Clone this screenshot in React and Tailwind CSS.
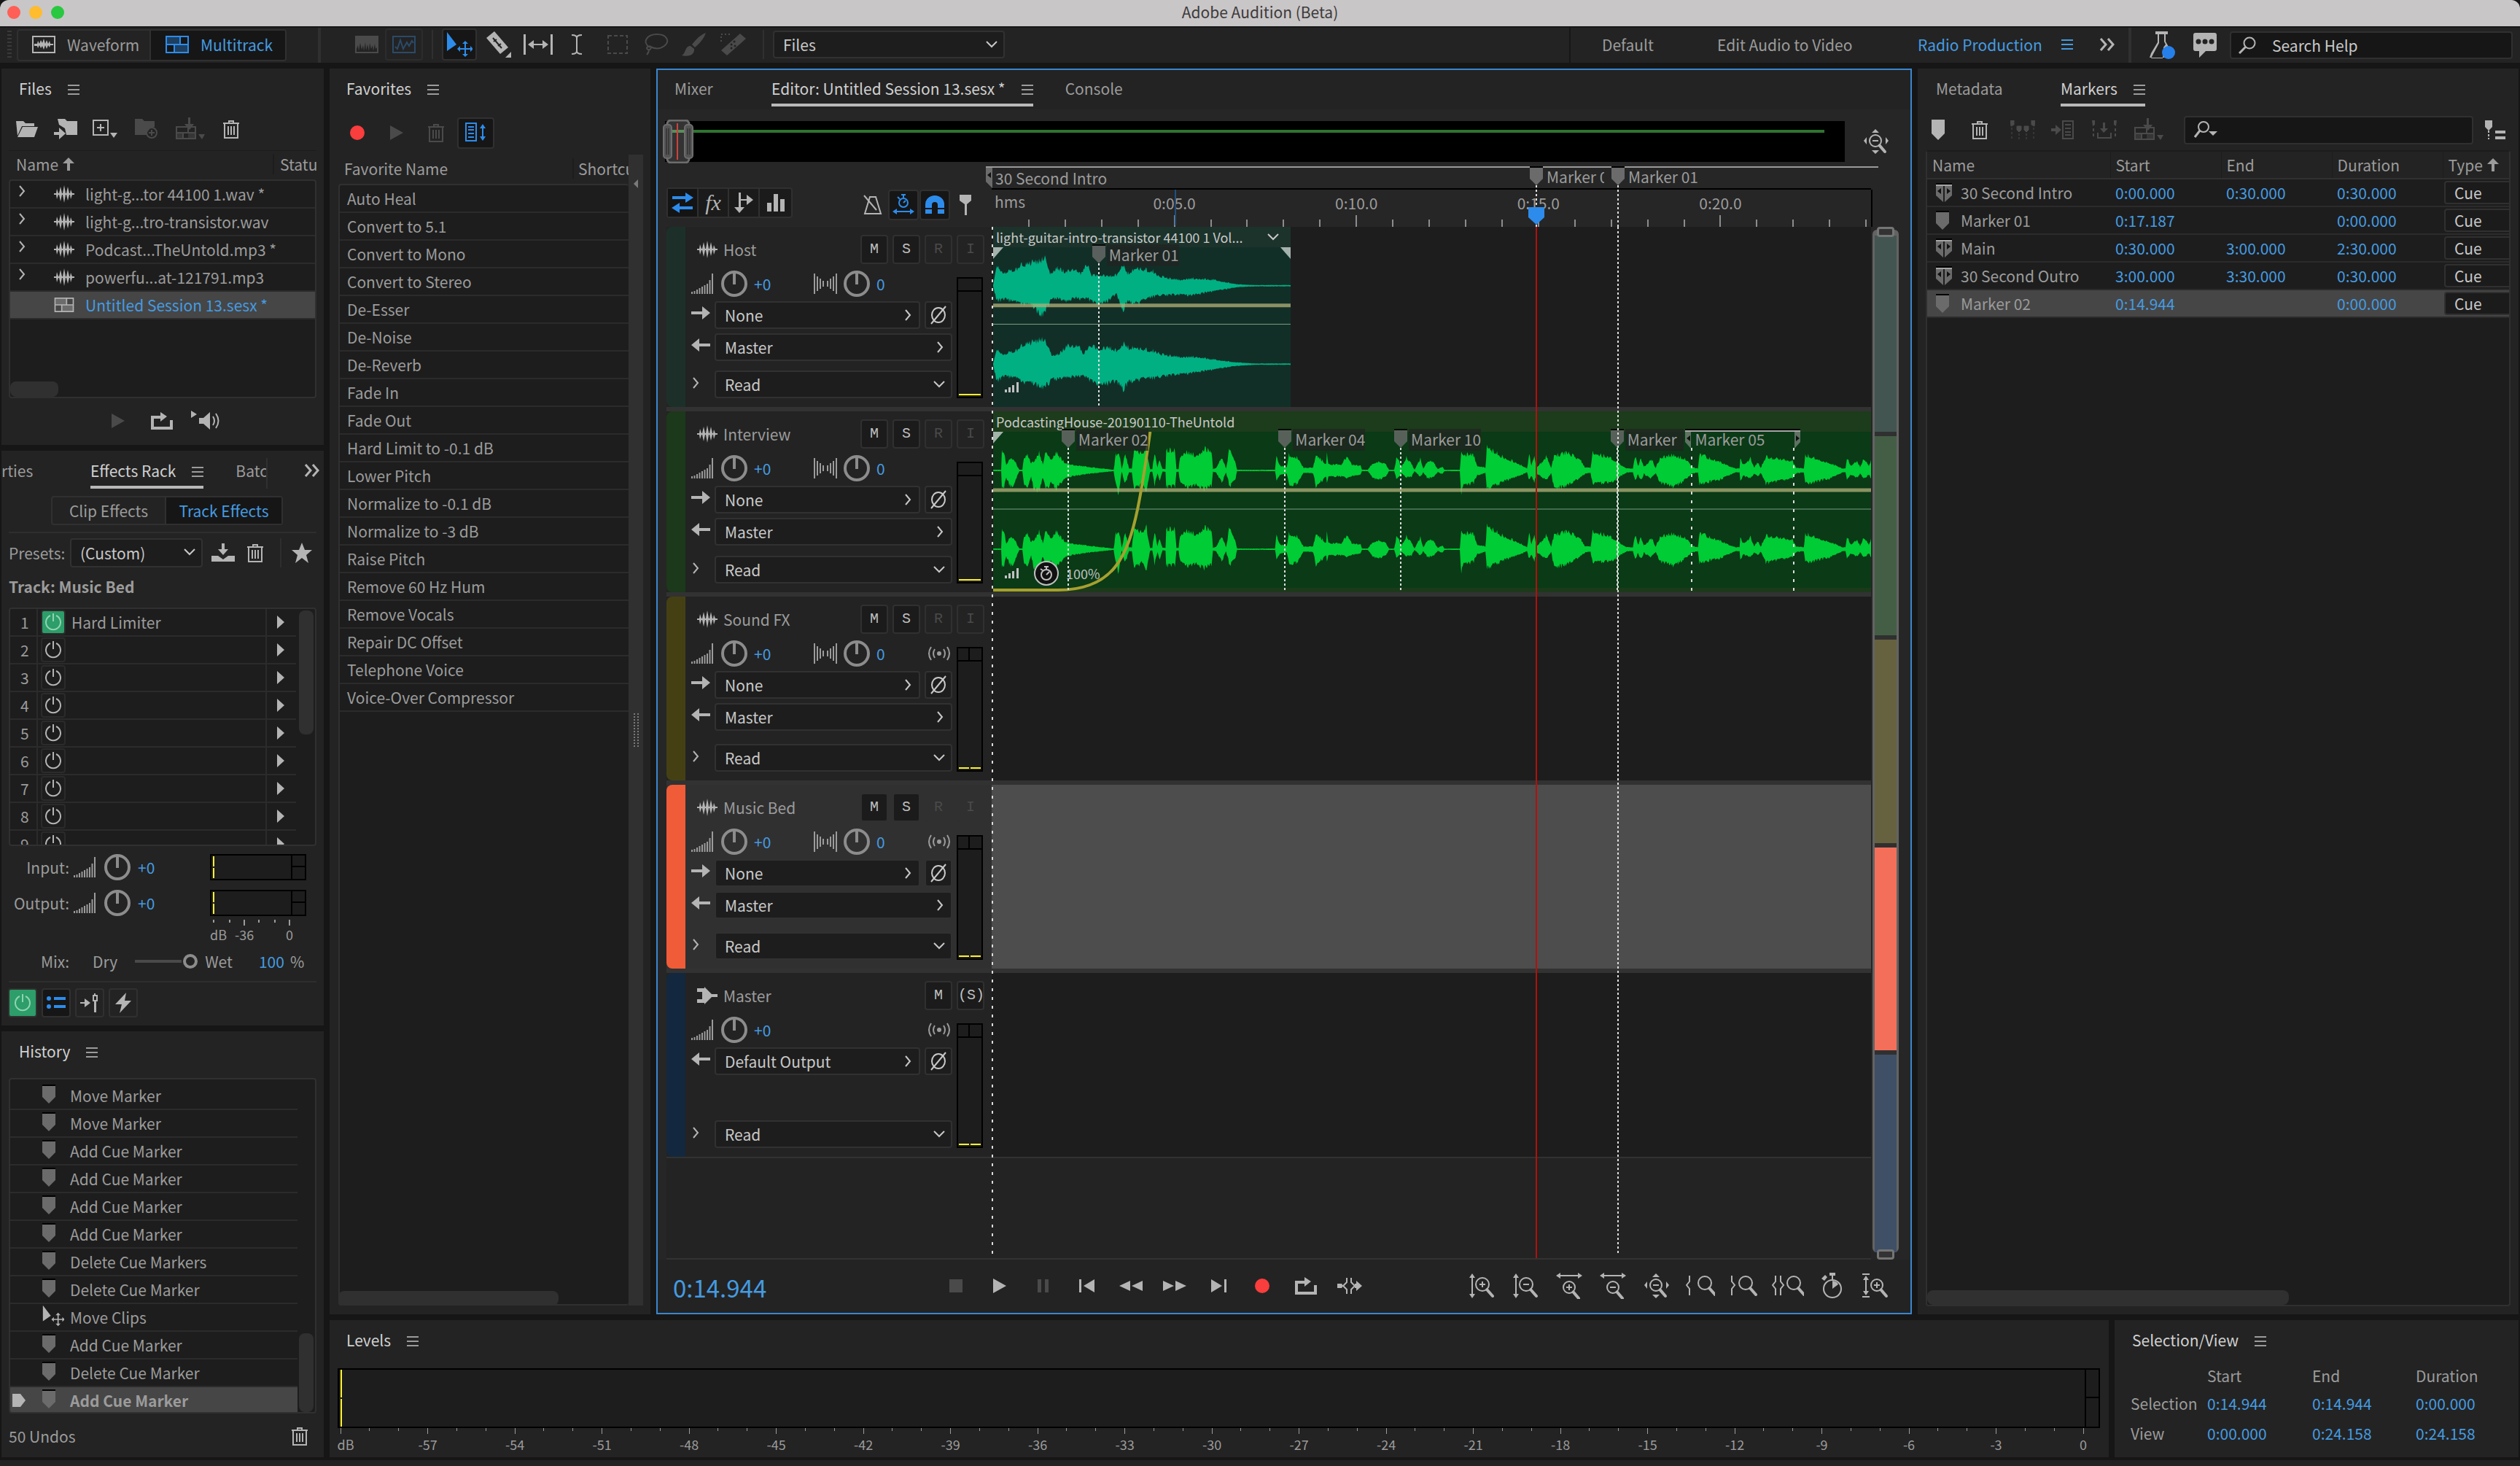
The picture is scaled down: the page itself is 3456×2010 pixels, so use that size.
import React from 'react'

const DURATION = 24.158
const pct = (seconds) => `${(seconds / DURATION) * 100}%`

const dash = "bg-[repeating-linear-gradient(to_bottom,#dcdcdc_0_3px,transparent_3px_6px)]"
const dashWide = "bg-[repeating-linear-gradient(to_bottom,#dcdcdc_0_4px,transparent_4px_12px)]"

/* ---------- icons ---------- */

const magnifier = (cx, cy, r) => (
    <>
        <circle cx={cx} cy={cy} r={r} fill="none" stroke="currentColor" strokeWidth="2" />
        <path d={`M${cx + r * 0.7} ${cy + r * 0.8}L${cx + r + 5} ${cy + r + 7}`} stroke="currentColor" strokeWidth="4" strokeLinecap="round" />
    </>
)

const trash = (
    <g fill="none" stroke="currentColor" strokeWidth="2">
        <path d="M1 5h22M9 5V2h6v3M3 5v20h18V5M8 9v12M12 9v12M16 9v12" />
    </g>
)

const multitrack = (
    <g>
        <path d="M1 1h30v22H1zM1 12h30M20 1v11M12 12v11" fill="none" stroke="currentColor" strokeWidth="2" />
        <path d="M2 2h18v10H2zM12 12h19v11H12z" fill="currentColor" opacity=".35" />
    </g>
)

const wave = (
    <path d="M0 11h3l1-6 2 6h1l2-9 2 9h1l2-11 2 11h1l2-9 2 9h1l1-5 2 5h3v2h-3l-2 6-1-6h-1l-2 8-2-8h-1l-2 11-2-11h-1l-2 9-2-9H6l-2 6-1-6H0z" fill="currentColor" />
)

const powerGlyph = (
    <g fill="none" stroke="currentColor" strokeWidth="2">
        <path d="M8 4a10 10 0 1 0 8 0M12 1v11" />
    </g>
)

const ICONS = {
    menu: [16, 16, <path d="M0 1h16v2H0zM0 7h16v2H0zM0 13h16v2H0z" fill="currentColor" />],
    waveBox: [32, 24, <g><path d="M1 1h30v22H1z" fill="none" stroke="currentColor" strokeWidth="2" /><path d="M3 11h4l1-4 2 4 2-5 2 4 2-6 2 7 2-5 2 5 2-4 1 4h4v2h-4l-1 3-2-3-2 5-2-5-2 6-2-5-2 3-2-4-2 4-1-3H3z" fill="currentColor" /></g>],
    multitrack: [32, 24, multitrack],
    wave: [28, 24, wave],
    spectral: [32, 24, <path d="M0 0h32v24H0zM2 22v-4l2-5 1 8 2-11 2 9 2-6 1 8 2-12 1 11 2-8 2 9 1-11 2 8 2-5 1 8 2-10 1 7 2-2v6z" fillRule="evenodd" fill="currentColor" />],
    pitch: [32, 24, <g fill="none" stroke="currentColor" strokeWidth="2"><path d="M1 1h30v22H1z" /><path d="M4 15l3 3 4-12 4 12 5-9 3 5 4-7 2 3" /></g>],
    move: [36, 34, <g fill="currentColor"><path d="M1 0v26l13-9z" /><path d="M26 12l-4 4h3v6h-6v-3l-4 4 4 4v-3h6v6h-3l4 4 4-4h-3v-6h6v3l4-4-4-4v3h-6v-6h3z" /></g>],
    razor: [36, 36, <g><path d="M1 9L12 0l19 22-11 9z" fill="currentColor" /><path d="M10 9l12 14M11 14l4-3M17 20l4-3" stroke="#232323" strokeWidth="2" fill="none" /><path d="M35 28v8h-8z" fill="currentColor" /></g>],
    slip: [40, 28, <g fill="currentColor"><path d="M0 0h3v28H0zM37 0h3v28h-3zM12 13h16v2H12z" /><path d="M6 14l8-6v12zM34 14l-8-6v12z" /></g>],
    ibeam: [16, 28, <path d="M1 1q7 0 7 4v18q0 4-7 4M15 1q-7 0-7 4v18q0 4 7 4" fill="none" stroke="currentColor" strokeWidth="2" />],
    marquee: [28, 26, <path d="M1 1h26v24H1z" fill="none" stroke="currentColor" strokeWidth="2" strokeDasharray="5 3" />],
    lasso: [34, 30, <path d="M8 19C-3 12 4 1 18 1s18 10 10 16-15 3-19 1-7 3-3 4 5-4 2-5M7 22q0 4-3 7" fill="none" stroke="currentColor" strokeWidth="2" />],
    brush: [34, 32, <path d="M33 0q-3 10-15 20l-4-4Q24 3 33 0zM12 18l5 4c1 9-9 11-17 9 6-3 4-13 12-13z" fill="currentColor" />],
    heal: [36, 32, <g><path d="M27 1l8 7L9 31l-8-7z" fill="currentColor" /><path d="M15 16h.1M19 12h.1M20 18h.1M15 21h.1" stroke="#232323" strokeWidth="3" strokeLinecap="round" /><path d="M1 12V2h14" fill="none" stroke="currentColor" strokeWidth="2" strokeDasharray="2 3" /></g>],
    chevDown: [16, 10, <path d="M1 1l7 7 7-7" fill="none" stroke="currentColor" strokeWidth="2" />],
    chevRight: [9, 16, <path d="M1 1l6 7-6 7" fill="none" stroke="currentColor" strokeWidth="2" />],
    double: [22, 18, <path d="M2 1l7 8-7 8M12 1l7 8-7 8" fill="none" stroke="currentColor" strokeWidth="3" />],
    flask: [36, 38, <g><path d="M8 0h17v4H8zM11 4h2v12L5 31l-3 6h16L19 22l3-4-2-4V4h2v10l8 14v8H0l2-6 9-15z" fill="currentColor" /><circle cx="26" cy="29" r="9" fill="#2680eb" /></g>],
    chat: [32, 34, <g><path d="M3 0h26q3 0 3 3v19q0 3-3 3H17l-9 9v-9H3q-3 0-3-3V3q0-3 3-3z" fill="currentColor" /><g fill="#232323"><circle cx="7" cy="12" r="3.5" /><circle cx="16" cy="12" r="3.5" /><circle cx="25" cy="12" r="3.5" /></g></g>],
    search: [24, 24, <g fill="none" stroke="currentColor"><circle cx="15" cy="9" r="7.5" strokeWidth="2" /><path d="M10 14l-9 9" strokeWidth="3" /></g>],
    searchDown: [34, 24, <g><g fill="none" stroke="currentColor"><circle cx="13" cy="8" r="7" strokeWidth="2" /><path d="M8 13l-7 9" strokeWidth="3" /></g><path d="M20 14h12l-6 6z" fill="currentColor" /></g>],
    open: [30, 22, <path d="M0 0h10l3 3h12v4H8L2 20zM9 8h21l-5 14H2z" fill="currentColor" />],
    importFile: [34, 28, <g fill="currentColor"><path d="M5 0h10l3 3h14v19H17l-2-9-8-5z" /><path d="M0 18h7v-6l9 8-9 8v-6H0z" /></g>],
    newFile: [34, 26, <g><path d="M1 1h20v20H1zM11 6v10M6 11h10" fill="none" stroke="currentColor" strokeWidth="2" /><path d="M24 18h10l-5 7z" fill="currentColor" /></g>],
    newFolder: [32, 28, <g><path d="M0 0h10l3 3h14v8l-6 2-4 5v4H0z" fill="currentColor" /><circle cx="23" cy="19" r="7" fill="none" stroke="currentColor" strokeWidth="2" /><path d="M23 15v8M19 19h8" stroke="currentColor" strokeWidth="2" /></g>],
    insert: [40, 32, <g><g fill="none" stroke="currentColor" strokeWidth="2"><path d="M1 13h26v16H1zM1 21h26M17 13v8M10 21v8" /></g><path d="M1 21h9v8H1zM17 21h10v8H17z" fill="currentColor" opacity=".5" /><path d="M17 0h3v9h5l-6 8-7-8h5zM31 23h9l-4 7z" fill="currentColor" /></g>],
    trash: [24, 26, trash],
    sortUp: [16, 18, <path d="M8 0l8 8h-6v10H6V8H0z" fill="currentColor" />],
    play: [20, 20, <path d="M1 0l18 10L1 20z" fill="currentColor" />],
    loop: [30, 24, <path d="M13 0l9 6-9 7V9H4v11h22v-9h4v13H0V5h13z" fill="currentColor" />],
    speaker: [42, 28, <g><path d="M0 0l8 5-8 5zM11 10h6l9-8v24l-9-8h-6z" fill="currentColor" /><path d="M30 8q4 6 0 12M34 4q7 10 0 20" fill="none" stroke="currentColor" strokeWidth="2" /></g>],
    record: [20, 20, <circle cx="10" cy="10" r="10" fill="#fa3d3d" />],
    listMode: [30, 28, <g fill="none" stroke="currentColor" strokeWidth="2"><path d="M1 1h14v24H1zM4 6h8M4 10h8M4 15h8M4 20h8M24 5v16" /><path d="M20 8l4-6 4 6zM20 19l4 6 4-6z" fill="currentColor" strokeWidth="0" /></g>],
    save: [32, 26, <path d="M14 0h4v8h5l-7 8-7-8h5zM0 17h9l7 5 7-5h9v8H0z" fill="currentColor" />],
    star: [28, 28, <path d="M14 0l4 10h10l-8 7 3 11-9-7-9 7 3-11-8-7h10z" fill="currentColor" />],
    power: [24, 26, powerGlyph],
    triangle: [10, 18, <path d="M0 0l10 9-10 9z" fill="currentColor" />],
    list: [26, 20, <g fill="currentColor"><circle cx="3" cy="4" r="3" /><circle cx="3" cy="15" r="3" /><path d="M10 2h16v4H10zM10 13h16v4H10z" /></g>],
    prefader: [26, 26, <g fill="currentColor"><path d="M0 12h6V7l8 6-8 6v-5H0zM19 9h3v17h-3z" /><path d="M18 3h5v7h-5zM20 0v3" fill="none" stroke="currentColor" strokeWidth="2" /></g>],
    bolt: [22, 28, <path d="M15 0L0 16h9L6 28l16-17h-9z" fill="currentColor" />],
    marker: [18, 28, <path d="M0 0h18v19l-9 9-9-9z" fill="currentColor" />],
    zoomOutFull: [34, 34, <g>{magnifier(16, 16, 8)}<path d="M12 16h8" stroke="currentColor" strokeWidth="2" /><path d="M16 0l5 5H11zM16 34l5-5H11zM0 16l4-5v10zM34 16l-4-5v10z" fill="currentColor" /></g>],
    zoomInV: [34, 34, <g>{magnifier(18, 15, 9)}<path d="M14 15h8M18 11v8M4 4v26" stroke="currentColor" strokeWidth="2" /><path d="M4 0l4 6H0zM4 34l4-6H0z" fill="currentColor" /></g>],
    zoomOutV: [34, 34, <g>{magnifier(18, 15, 9)}<path d="M14 15h8M4 4v26" stroke="currentColor" strokeWidth="2" /><path d="M4 0l4 6H0zM4 34l4-6H0z" fill="currentColor" /></g>],
    zoomInH: [36, 36, <g>{magnifier(18, 20, 8)}<path d="M14 20h8M18 16v8M5 4h26" stroke="currentColor" strokeWidth="2" /><path d="M0 4l6-4v8zM36 4l-6-4v8z" fill="currentColor" /></g>],
    zoomOutH: [36, 36, <g>{magnifier(18, 20, 8)}<path d="M14 20h8M5 4h26" stroke="currentColor" strokeWidth="2" /><path d="M0 4l6-4v8zM36 4l-6-4v8z" fill="currentColor" /></g>],
    zoomInPoint: [40, 28, <g>{magnifier(26, 10, 9)}<path d="M5 0v8l-4 5 4 5v9" fill="none" stroke="currentColor" strokeWidth="2" /></g>],
    zoomOutPoint: [36, 28, <g>{magnifier(20, 10, 9)}<path d="M1 0v8l4 5-4 5v9" fill="none" stroke="currentColor" strokeWidth="2" /></g>],
    zoomSelection: [44, 28, <g>{magnifier(30, 10, 9)}<path d="M5 0v8l-4 5 4 5v9M12 0v8l4 5-4 5v9" fill="none" stroke="currentColor" strokeWidth="2" /></g>],
    stopwatch: [28, 36, <g><circle cx="15" cy="22" r="12" fill="none" stroke="currentColor" strokeWidth="2" /><path d="M15 22V11q7 1 8 5zM11 0h8v4h-3v5h-2V4h-3zM0 8l5-5 3 3-4 5z" fill="currentColor" /></g>],
    zoomTrack: [36, 34, <g>{magnifier(20, 16, 8)}<path d="M16 16h8M20 12v8M5 6v20M0 1h10M0 32h10" stroke="currentColor" strokeWidth="2" /><path d="M5 3l4 6H1zM5 30l4-6H1z" fill="currentColor" /></g>],
    stop: [18, 18, <path d="M0 0h18v18H0z" fill="currentColor" />],
    pause: [16, 18, <path d="M0 0h5v18H0zM10 0h5v18h-5z" fill="currentColor" />],
    prev: [22, 18, <path d="M0 0h3v18H0zM21 0v18L6 9z" fill="currentColor" />],
    next: [22, 18, <path d="M19 0h3v18h-3zM1 0v18l15-9z" fill="currentColor" />],
    rewind: [32, 14, <path d="M15 0v14L0 7zM32 0v14L17 7z" fill="currentColor" />],
    forward: [32, 14, <path d="M0 0v14l15-7zM17 0v14l15-7z" fill="currentColor" />],
    skip: [34, 22, <g><path d="M0 8h6l2 3-2 3H0zM24 8h2V4l8 7-8 7v-4h-2z" fill="currentColor" /><path d="M13 0v6l-5 5 5 5v6M19 0v6l5 5-5 5v6" fill="none" stroke="currentColor" strokeWidth="2" /></g>],
    swap: [30, 30, <path d="M1 6h18V1l11 7-11 7v-5H1zM29 20H11v-5L0 22l11 7v-5h18z" fill="currentColor" />],
    sends: [26, 28, <g fill="currentColor"><path d="M6 0h3v20h5l-7 8-7-8h6z" /><path d="M9 9h8V3l9 7-9 7v-6H9z" /></g>],
    bars: [24, 24, <path d="M0 12h6v12H0zM9 0h6v24H9zM18 7h6v17h-6z" fill="currentColor" />],
    metronome: [26, 28, <g fill="none" stroke="currentColor" strokeWidth="2"><path d="M9 3h8l7 23H2z" /><path d="M1 1l17 20" /></g>],
    snapTime: [30, 30, <g fill="none" stroke="currentColor" strokeWidth="2"><circle cx="15" cy="12" r="6" /><path d="M15 12l3-3M12 1h6M15 1v4M7 4l3 3M4 24h22" /><path d="M0 24l6-4v8zM30 24l-6-4v8z" fill="currentColor" strokeWidth="0" /></g>],
    magnet: [26, 26, <g><path d="M0 25V12a13 12 0 0 1 26 0v13h-9V13a4 4 0 0 0-8 0v12z" fill="currentColor" /><path d="M0 18h9M17 18h9" stroke="#161616" strokeWidth="2" /></g>],
    pin: [16, 28, <path d="M0 0h16v8l-6 5v15H7V13L0 8z" fill="currentColor" />],
    volume: [32, 28, <path d="M1 28v-3M4.500 28v-4M8 28v-6M11.500 28v-8M15 28v-10M18.500 28v-12M22 28v-14M25.500 28v-19M29 28V0" stroke="currentColor" strokeWidth="2" />],
    pan: [32, 28, <path d="M1 0v28M5 4v20M9 7v14M13 10v8M19 10v8M23 7v14M27 4v20M31 0v28" stroke="currentColor" strokeWidth="2" />],
    knob: [36, 36, <g fill="none" stroke="#8c8c8c"><circle cx="18" cy="18" r="16" strokeWidth="4" /><path d="M18 3v16" strokeWidth="4" /></g>],
    arrowIn: [26, 18, <path d="M0 7h15V0l11 9-11 9v-7H0z" fill="currentColor" />],
    arrowOut: [26, 18, <path d="M26 7H11V0L0 9l11 9v-7h15z" fill="currentColor" />],
    phase: [24, 26, <g fill="none" stroke="currentColor" strokeWidth="2"><ellipse cx="12" cy="13" rx="9" ry="10" /><path d="M2 25L22 1" /></g>],
    mono: [32, 20, <g fill="none" stroke="currentColor" strokeWidth="2"><circle cx="16" cy="10" r="3" fill="currentColor" strokeWidth="0" /><path d="M10 4q-4 6 0 12M22 4q4 6 0 12M5 1q-6 9 0 18M27 1q6 9 0 18" /></g>],
    master: [28, 24, <path d="M0 2h10V0l10 10h8v4h-8L10 24v-2H0v-5h7V7H0z" fill="currentColor" />],
    clipBars: [20, 14, <path d="M0 10h3v4H0zM5 7h3v7H5zM10 4h3v10h-3zM16 0h3v14h-3z" fill="currentColor" />],
    mergeMarkers: [34, 26, <path d="M0 0h5v6l-4 2zM34 0h-5v6l4 2zM9 8h6v5l-3 3-3-3zM19 8h6v5l-3 3-3-3zM2 10v3M2 16v3M2 22v3M12 18v3M12 23v3M22 18v3M22 23v3M32 10v3M32 16v3M32 22v3" fill="currentColor" stroke="currentColor" />],
    toPlaylist: [32, 26, <g><path d="M0 11h6V6l8 7-8 7v-5H0z" fill="currentColor" /><path d="M16 1h14v24H16zM19 6h8M19 11h8M19 16h8M19 20h8" fill="none" stroke="currentColor" strokeWidth="2" /></g>],
    exportMarkers: [34, 26, <g><path d="M0 0h4v6l-3 2zM34 0h-4v6l3 2zM15 3h3v8h4l-6 6-5-6h4z" fill="currentColor" /><path d="M2 11v14M32 11v14" stroke="currentColor" strokeWidth="2" strokeDasharray="4 3" /><path d="M8 17v7h18v-7" fill="none" stroke="currentColor" strokeWidth="2" /></g>],
    markerList: [28, 26, <g><path d="M0 0h10v9l-5 5-5-5zM14 14h14v4H14zM14 22h14v4H14z" fill="currentColor" /><path d="M5 14v12" stroke="currentColor" strokeWidth="2" strokeDasharray="3 2" /></g>],
    cue: [18, 26, <g><path d="M0 0h18v2H0z" fill="#000" /><path d="M0 2h18v15l-9 9-9-9z" fill="#6b6b6b" /></g>],
    range: [22, 26, <g><path d="M0 0h22v2H0z" fill="#000" /><path d="M0 2h10v24L0 17zM12 2h10v15l-10 9z" fill="#6b6b6b" /><path d="M0 2h22v2H0z" fill="#a5a5a5" /><path d="M7 7v8l-5-4zM15 7v8l5-4z" fill="#111" /></g>],
}

function Icon({ name, className = "" }) {
    const [w, h, body] = ICONS[name]
    return (
        <svg width={w} height={h} viewBox={`0 0 ${w} ${h}`} className={`shrink-0 ${className}`} aria-hidden="true">
            {body}
        </svg>
    )
}

function IconButton({ name, label, className = "" }) {
    return (
        <button type="button" aria-label={label || name} className={`flex shrink-0 items-center justify-center ${className}`}>
            <Icon name={name} />
        </button>
    )
}

/* ---------- shared pieces ---------- */

function Panel({ className = "", children }) {
    return <section className={`flex min-w-0 flex-col overflow-hidden bg-[#232323] ${className}`}>{children}</section>
}

function Tab({ children, active, menu, className = "" }) {
    return (
        <div className={`flex h-[52px] shrink-0 items-center gap-[22px] whitespace-nowrap border-b-4 pt-[6px] ${active ? "border-[#b9b9b9]" : "border-transparent"} ${className}`}>
            <button type="button" className={menu ? "text-[#d0d0d0]" : "text-[#9b9b9b]"}>{children}</button>
            {menu && <IconButton name="menu" label="Panel menu" className="pt-[3px]" />}
        </div>
    )
}

function Select({ label, value, className = "" }) {
    return (
        <div className={`relative rounded border-2 border-[#313131] bg-[#1d1d1d] text-[#c8c8c8] ${className}`}>
            <select aria-label={label} className="block h-full w-full appearance-none pl-3 outline-none">
                <option>{value}</option>
            </select>
            <Icon name="chevDown" className="pointer-events-none absolute right-2 top-3" />
        </div>
    )
}

const ScrollThumb = ({ className }) => <div className={`absolute rounded-lg bg-[#303030] ${className}`} />

/* ---------- top bar ---------- */

function TitleBar() {
    return (
        <header className="relative flex h-[36px] shrink-0 items-center justify-center rounded-t-xl bg-[#c9c6c7] pb-1 text-[#3d3b3c]">
            <div className="absolute left-[10px] top-2 flex gap-3">
                <span className="size-[18px] rounded-full bg-[#ff5f57]" />
                <span className="size-[18px] rounded-full bg-[#febc2e]" />
                <span className="size-[18px] rounded-full bg-[#28c840]" />
            </div>
            <h1>Adobe Audition (Beta)</h1>
        </header>
    )
}

function Toolbar() {
    return (
        <nav className="mt-[2px] flex h-[48px] shrink-0 items-center bg-[#232323] text-[#b4b4b4]">
            <div className="ml-[10px] mr-[7px] h-[40px] w-[6px] bg-[repeating-linear-gradient(to_bottom,#3a3a3a_0_2px,transparent_2px_5px)]" />
            <div className="flex h-[44px] overflow-hidden rounded border-2 border-[#303030]">
                <button type="button" className="flex w-[182px] items-center gap-4 border-r-2 border-[#303030] pb-[2px] pl-[19px] text-[#9b9b9b]">
                    <Icon name="waveBox" className="text-[#b4b4b4]" />Waveform
                </button>
                <button type="button" className="flex w-[184px] items-center gap-4 bg-[#161616] pb-[2px] pl-5 text-[#459be0]">
                    <Icon name="multitrack" className="text-[#2d8ceb]" />Multitrack
                </button>
            </div>
            <div className="ml-[43px] h-full w-1 bg-[#303030]" />
            <div className="flex flex-1 items-center pb-[2px]">
                <IconButton name="spectral" className="ml-[38px] w-[50px] text-[#4a4a4a]" />
                <IconButton name="pitch" className="h-[44px] w-[52px] rounded border-2 border-[#2c2c2c] text-[#2b4a68]" />
                <div className="mx-[12px] h-[40px] w-[2px] bg-[#303030]" />
                <IconButton name="move" className="h-[44px] w-[48px] rounded border-2 border-[#303030] bg-[#161616] text-[#2d8ceb]" />
                <IconButton name="razor" className="w-[60px]" />
                <IconButton name="slip" className="w-[48px]" />
                <IconButton name="ibeam" className="w-[58px]" />
                <IconButton name="marquee" className="w-[54px] text-[#4a4a4a]" />
                <IconButton name="lasso" className="w-[52px] text-[#4a4a4a]" />
                <IconButton name="brush" className="w-[52px] text-[#4a4a4a]" />
                <IconButton name="heal" className="w-[56px] text-[#4a4a4a]" />
                <div className="mx-[12px] h-[40px] w-[2px] bg-[#303030]" />
                <Select label="Snap target" value="Files" className="h-[38px] w-[318px]" />
            </div>
            <div className="flex h-full items-center border-l-2 border-[#161616] pb-[2px] pl-[43px] text-[#9b9b9b]">
                <a href="#default" className="w-[158px]">Default</a>
                <a href="#edit" className="w-[275px]">Edit Audio to Video</a>
                <a href="#radio" className="w-[197px] text-[#459be0]">Radio Production</a>
                <IconButton name="menu" label="Workspace menu" className="text-[#459be0]" />
                <IconButton name="double" label="More workspaces" className="ml-[36px] text-[#b4b4b4]" />
            </div>
            <div className="ml-[18px] h-full w-1 bg-[#303030]" />
            <IconButton name="flask" className="ml-[25px]" />
            <IconButton name="chat" className="ml-[24px]" />
            <label className="ml-[18px] mr-[10px] flex h-[38px] w-[388px] items-center gap-[22px] rounded border-2 border-[#303030] bg-[#161616] pl-[10px]">
                <Icon name="search" />
                <input aria-label="Search Help" placeholder="Search Help" className="w-full bg-transparent outline-none placeholder:text-[#c8c8c8]" />
            </label>
        </nav>
    )
}

/* ---------- left column ---------- */

const FILES = ["light-g...tor 44100 1.wav *", "light-g...tro-transistor.wav", "Podcast...TheUntold.mp3 *", "powerfu...at-121791.mp3"]

function FilesPanel() {
    return (
        <Panel className="h-[516px] shrink-0">
            <Tab menu className="ml-6">Files</Tab>
            <div className="flex h-[60px] items-center pl-5 pt-[2px] text-[#b4b4b4]">
                <IconButton name="open" />
                <IconButton name="importFile" className="ml-[22px]" />
                <IconButton name="newFile" className="ml-[19px]" />
                <IconButton name="newFolder" className="ml-[24px] text-[#4a4a4a]" />
                <IconButton name="insert" className="ml-[24px] text-[#4a4a4a]" />
                <IconButton name="trash" className="ml-[24px]" />
            </div>
            <div className="mx-[10px] flex h-[40px] items-center border-t border-[#1c1c1c] pb-[3px] pl-[10px]">
                <span>Name</span>
                <Icon name="sortUp" className="ml-[6px]" />
                <span className="ml-auto flex h-[28px] w-[60px] items-center overflow-hidden border-l-2 border-[#1c1c1c] pl-2">Statu</span>
            </div>
            <ul className="relative mx-[10px] h-[300px] rounded border-2 border-[#303030] bg-[#1d1d1d]">
                {FILES.map((name) => (
                    <li key={name} className="flex h-[38px] items-center border-b-2 border-[#2b2b2b] pl-3">
                        <Icon name="chevRight" className="mb-2 text-[#b4b4b4]" />
                        <Icon name="wave" className="ml-[39px] mr-[15px] text-[#b4b4b4]" />
                        {name}
                    </li>
                ))}
                <li className="flex h-[38px] items-center border-b-2 border-[#2b2b2b] bg-[#464646] pl-[60px] text-[#459be0]">
                    <svg width="28" height="20" viewBox="0 0 32 24" className="mr-[15px] text-[#b4b4b4]">{multitrack}</svg>
                    Untitled Session 13.sesx *
                </li>
                <ScrollThumb className="bottom-0 left-0 h-[21px] w-[66px]" />
            </ul>
            <div className="flex flex-1 items-center pb-[2px] pl-[150px] text-[#b4b4b4]">
                <IconButton name="play" label="Play" className="text-[#4a4a4a]" />
                <IconButton name="loop" label="Loop" className="ml-[35px]" />
                <IconButton name="speaker" label="Auto-play" className="ml-[25px]" />
            </div>
        </Panel>
    )
}

const Knob = ({ label }) => <IconButton name="knob" label={label} />

function RackMeter() {
    return (
        <div className="flex h-[36px] w-[132px] border-2 border-black bg-[#1d1d1d]">
            <div className="flex flex-1 flex-col gap-[2px] px-[2px] py-px">
                <span className="w-[2px] flex-1 bg-[#fff22d]" />
                <span className="w-[2px] flex-1 bg-[#fff22d]" />
            </div>
            <div className="flex w-[19px] flex-col border-l-2 border-black">
                <div className="h-1/2 border-b-2 border-black" />
            </div>
        </div>
    )
}

function EffectsPanel() {
    return (
        <Panel className="h-[788px] shrink-0">
            <div className="flex items-start">
                <Tab className="w-[122px]">rties</Tab>
                <Tab active menu>Effects Rack</Tab>
                <Tab className="ml-[44px] w-[42px] overflow-hidden">Batc</Tab>
                <div className="mt-[10px] h-[42px] w-[2px] bg-[#303030]" />
                <IconButton name="double" label="More tabs" className="ml-[50px] mt-[18px] text-[#b4b4b4]" />
            </div>
            <div className="ml-[68px] mt-[10px] flex h-[40px] w-[318px] shrink-0 rounded border-2 border-[#303030]">
                <button type="button" className="w-[156px] border-r-2 border-[#303030]">Clip Effects</button>
                <button type="button" className="flex-1 bg-[#161616] text-[#459be0]">Track Effects</button>
            </div>
            <div className="mx-[10px] mt-[9px] h-[2px] shrink-0 bg-[#2e2e2e]" />
            <div className="mt-[7px] flex h-[40px] shrink-0 items-center pl-[10px] text-[#b4b4b4]">
                <span className="w-[84px] text-[#9b9b9b]">Presets:</span>
                <Select label="Presets" value="(Custom)" className="h-[40px] w-[182px]" />
                <IconButton name="save" className="ml-3" />
                <IconButton name="trash" className="ml-4" />
                <div className="ml-[22px] h-full w-[2px] bg-[#2e2e2e]" />
                <IconButton name="star" label="Favorite" className="ml-[14px]" />
            </div>
            <h2 className="ml-[10px] flex h-[55px] shrink-0 items-center pb-[3px] font-bold">Track: Music Bed</h2>
            <div className="relative mx-[10px] h-[327px] shrink-0 overflow-hidden rounded border-2 border-[#303030] bg-[#1d1d1d]">
                <ol className="mr-[26px]">
                    {["Hard Limiter", "", "", "", "", "", "", "", ""].map((fx, i) => (
                        <li key={i} className="flex h-[38px] items-center border-b-2 border-[#2b2b2b]">
                            <span className="w-[38px] border-r-2 border-[#2b2b2b] pl-[14px] leading-[36px]">{i + 1}</span>
                            <button type="button" aria-label={`Power ${i + 1}`} className={`ml-1 flex h-[34px] w-[34px] items-center justify-center rounded border-2 border-[#2b2b2b] ${i ? "text-[#b4b4b4]" : "bg-[#2d9d69] text-[#8fd4b2]"}`}>
                                <Icon name="power" />
                            </button>
                            <span className="ml-2">{fx}</span>
                            <span className="ml-auto flex h-full w-[42px] items-center border-l-2 border-[#2b2b2b] pl-[14px] text-[#b4b4b4]">
                                <Icon name="triangle" />
                            </span>
                        </li>
                    ))}
                </ol>
                <ScrollThumb className="right-[2px] top-[2px] h-[170px] w-5" />
            </div>
            <div className="mt-[4px] flex flex-col pr-[24px]">
                {["Input:", "Output:"].map((label) => (
                    <div key={label} className="flex h-[49px] items-center">
                        <span className="w-[93px] text-right">{label}</span>
                        <Icon name="volume" className="ml-[6px] mr-[10px] text-[#9b9b9b]" />
                        <Knob label={label} />
                        <span className="ml-[10px] text-[#459be0]">+0</span>
                        <div className="ml-auto"><RackMeter /></div>
                    </div>
                ))}
            </div>
            <div className="-mt-px ml-[286px] flex h-[34px] w-[132px] shrink-0 flex-col text-[18px] leading-[24px]">
                <svg height="8" width="132"><path d="M5 0v4M27 0v4M47 0v8M67 0v4M89 0v4M109 0v8" stroke="#9b9b9b" strokeWidth="2" /></svg>
                <div className="flex"><span className="w-[34px]">dB</span><span className="w-[70px]">-36</span><span>0</span></div>
            </div>
            <div className="mb-[2px] mt-[6px] flex h-[34px] shrink-0 items-center">
                <label htmlFor="mix" className="w-[93px] text-right">Mix:</label>
                <span className="ml-[32px]">Dry</span>
                <input id="mix" type="range" defaultValue="100" className="ml-[24px] h-[22px] w-[86px] appearance-none bg-[linear-gradient(#4a4a4a,#4a4a4a)] bg-[length:64px_4px] bg-left bg-no-repeat [&::-webkit-slider-thumb]:size-5 [&::-webkit-slider-thumb]:appearance-none [&::-webkit-slider-thumb]:rounded-full [&::-webkit-slider-thumb]:border-4 [&::-webkit-slider-thumb]:border-[#8c8c8c] [&::-webkit-slider-thumb]:bg-[#232323]" />
                <span className="ml-[10px]">Wet</span>
                <span className="ml-[36px] text-[#459be0]">100</span>
                <span className="ml-2">%</span>
            </div>
            <div className="mx-[10px] mt-[8px] h-[2px] shrink-0 bg-[#2e2e2e]" />
            <div className="mt-[8px] flex gap-[6px] pl-[9px] text-[#b4b4b4]">
                <IconButton name="power" className="size-10 rounded border-2 border-[#303030] bg-[#2d9d69] text-[#8fd4b2]" />
                <IconButton name="list" className="size-10 rounded border-2 border-[#303030] bg-[#161616] text-[#2d8ceb]" />
                <IconButton name="prefader" className="size-10 rounded border-2 border-[#303030]" />
                <IconButton name="bolt" className="size-10 rounded border-2 border-[#303030]" />
            </div>
        </Panel>
    )
}

const HISTORY = ["Move Marker", "Move Marker", "Add Cue Marker", "Add Cue Marker", "Add Cue Marker", "Add Cue Marker", "Delete Cue Markers", "Delete Cue Marker", "Move Clips", "Add Cue Marker", "Delete Cue Marker", "Add Cue Marker"]

function HistoryPanel() {
    return (
        <Panel className="flex-1">
            <Tab menu className="ml-6">History</Tab>
            <ul className="relative mx-[10px] mt-[12px] flex-1 overflow-hidden rounded border-2 border-[#303030] bg-[#1d1d1d] pr-[24px] pt-1">
                {HISTORY.map((step, i) => {
                    const last = i === HISTORY.length - 1
                    return (
                        <li key={i} className={`flex h-[38px] items-center border-b-2 border-[#2b2b2b] ${last ? "bg-[#464646] font-bold" : ""}`}>
                            <span className="w-[40px] pl-[3px] text-[#b4b4b4]">
                                {last && <svg width="18" height="18"><path d="M0 0h11l7 9-7 9H0z" fill="currentColor" /></svg>}
                            </span>
                            <span className="flex w-[42px] pb-1 pl-1 text-[#b4b4b4]">
                                {step === "Move Clips" ? <svg width="30" height="30" viewBox="0 0 36 34">{ICONS.move[2]}</svg> : <Icon name="cue" />}
                            </span>
                            {step}
                        </li>
                    )
                })}
                <ScrollThumb className="bottom-0 right-[2px] h-[108px] w-5" />
            </ul>
            <div className="flex h-[60px] items-center justify-between pl-[10px] pr-[21px] pt-[2px]">
                50 Undos
                <IconButton name="trash" label="Delete history" className="text-[#b4b4b4]" />
            </div>
        </Panel>
    )
}

/* ---------- favorites ---------- */

const FAVORITES = ["Auto Heal", "Convert to 5.1", "Convert to Mono", "Convert to Stereo", "De-Esser", "De-Noise", "De-Reverb", "Fade In", "Fade Out", "Hard Limit to -0.1 dB", "Lower Pitch", "Normalize to -0.1 dB", "Normalize to -3 dB", "Raise Pitch", "Remove 60 Hz Hum", "Remove Vocals", "Repair DC Offset", "Telephone Voice", "Voice-Over Compressor"]

function FavoritesPanel() {
    return (
        <Panel className="w-[440px] shrink-0">
            <Tab menu className="ml-[23px]">Favorites</Tab>
            <div className="flex h-[66px] shrink-0 items-center pl-[28px] pt-[6px] text-[#4a4a4a]">
                <IconButton name="record" label="Record favorite" />
                <IconButton name="play" label="Run favorite" className="ml-[34px]" />
                <IconButton name="trash" className="ml-[32px]" />
                <IconButton name="listMode" className="ml-[17px] h-[43px] w-[51px] rounded border-2 border-[#303030] bg-[#161616] text-[#2d8ceb]" />
            </div>
            <div className="mb-[12px] flex min-h-0 flex-1 pl-3 pr-[10px]">
                <div className="relative min-w-0 flex-1">
                    <div className="flex h-[40px] items-center pb-[2px] pl-2">
                        Favorite Name
                        <span className="ml-auto flex h-[28px] w-[77px] items-center overflow-hidden border-l-2 border-[#1c1c1c] pl-[6px]">Shortcu</span>
                    </div>
                    <ul className="h-[calc(100%-40px)] rounded border-2 border-r-0 border-[#303030] bg-[#1d1d1d]">
                        {FAVORITES.map((name) => (
                            <li key={name} className="flex h-[38px] items-center border-b-2 border-[#2b2b2b] pl-[10px]">{name}</li>
                        ))}
                    </ul>
                    <ScrollThumb className="bottom-0 left-0 h-5 w-[302px]" />
                </div>
                <div className="flex w-5 flex-col items-center bg-[#303030]">
                    <svg width="6" height="12" className="mt-[34px]"><path d="M6 0v12L0 6z" fill="#7a7a7a" /></svg>
                    <svg width="7" height="46" className="mt-[720px]"><path d="M1 0v46M6 0v46" stroke="#7a7a7a" strokeWidth="2" strokeDasharray="2 2" /></svg>
                </div>
            </div>
        </Panel>
    )
}

/* ---------- editor ---------- */

// Envelope points: [x, peak above the axis, peak below the axis]
const GUITAR = [[0, 1, 1], [5, 30, 22], [14, 20, 20], [32, 24, 24], [40, 32, 26], [55, 34, 30], [65, 38, 44], [73, 40, 34], [78, 18, 22], [86, 26, 18], [100, 20, 24], [112, 26, 18], [120, 18, 20], [130, 34, 20], [135, 16, 24], [146, 16, 28], [158, 14, 22], [169, 16, 12], [177, 32, 38], [184, 18, 24], [198, 26, 26], [218, 22, 16], [227, 14, 14], [241, 11, 14], [255, 9, 13], [273, 11, 14], [301, 9, 8], [319, 5, 5], [336, 2, 2], [359, 1, 1], [408, 1, 1]]
const GUITAR_R = [[0, 1, 1], [5, 22, 25], [14, 15, 18], [32, 20, 20], [43, 31, 27], [55, 32, 28], [65, 38, 34], [75, 30, 30], [80, 14, 22], [90, 14, 22], [100, 26, 20], [117, 29, 18], [124, 14, 18], [132, 30, 24], [146, 22, 32], [158, 25, 28], [169, 20, 26], [178, 30, 38], [186, 24, 26], [204, 23, 22], [221, 19, 20], [232, 14, 18], [255, 11, 15], [278, 11, 12], [301, 7, 8], [330, 3, 3], [359, 1, 1], [408, 1, 1]]
const VOICE = [[0, 1, 1], [11, 1, 1], [12, 31, 28], [15, 28, 24], [18, 9, 12], [24, 17, 24], [28, 18, 24], [33, 6, 8], [36, 1, 1], [40, 1, 1], [42, 20, 18], [47, 23, 28], [52, 11, 10], [56, 12, 28], [63, 27, 30], [68, 9, 10], [73, 30, 28], [79, 16, 18], [86, 27, 27], [92, 18, 20], [100, 10, 11], [112, 8, 8], [140, 4, 4], [165, 1, 1], [168, 23, 21], [172, 27, 38], [174, 20, 18], [176, 2, 2], [181, 24, 20], [186, 3, 3], [190, 3, 3], [193, 30, 27], [203, 26, 20], [210, 32, 32], [215, 2, 2], [218, 2, 2], [221, 26, 21], [225, 5, 5], [228, 16, 14], [232, 2, 2], [236, 2, 2], [237, 30, 24], [249, 30, 24], [251, 2, 2], [254, 2, 2], [256, 22, 18], [264, 28, 24], [278, 22, 22], [290, 32, 28], [299, 30, 22], [301, 2, 2], [305, 3, 3], [313, 20, 18], [319, 3, 3], [324, 34, 24], [332, 11, 12], [334, 1, 1], [386, 1, 1], [388, 21, 16], [393, 7, 7], [402, 5, 5], [405, 23, 22], [417, 19, 20], [425, 4, 4], [438, 4, 4], [442, 24, 23], [454, 11, 11], [456, 11, 11], [457, 27, 20], [459, 11, 10], [463, 9, 9], [477, 9, 9], [484, 21, 12], [491, 9, 9], [503, 7, 7], [505, 1, 1], [513, 1, 1], [520, 11, 12], [529, 14, 14], [538, 9, 9], [542, 1, 1], [549, 1, 1], [553, 22, 14], [559, 4, 4], [566, 20, 11], [573, 9, 9], [577, 1, 1], [585, 18, 10], [589, 3, 3], [595, 14, 12], [603, 12, 10], [609, 2, 2], [615, 6, 6], [618, 1, 1], [639, 1, 1], [641, 32, 36], [643, 25, 24], [658, 22, 18], [663, 7, 7], [674, 4, 4], [676, 34, 28], [698, 20, 17], [718, 11, 9], [731, 3, 3], [734, 23, 15], [737, 8, 8], [741, 20, 18], [744, 5, 5], [750, 11, 9], [758, 21, 15], [764, 4, 4], [768, 21, 27], [786, 27, 23], [804, 16, 11], [810, 5, 5], [818, 4, 4], [821, 27, 20], [847, 17, 17], [856, 11, 11], [867, 3, 3], [876, 3, 3], [879, 21, 15], [883, 6, 6], [887, 18, 15], [891, 5, 5], [895, 9, 9], [901, 18, 12], [907, 4, 4], [913, 18, 18], [932, 23, 25], [950, 16, 12], [956, 5, 5], [965, 3, 3], [967, 24, 20], [996, 12, 13], [1016, 3, 3], [1022, 3, 3], [1023, 20, 16], [1027, 8, 8], [1037, 18, 12], [1042, 5, 5], [1047, 12, 9], [1051, 4, 4], [1058, 20, 20], [1094, 14, 12], [1100, 4, 4], [1110, 3, 3], [1112, 23, 20], [1146, 11, 12], [1163, 3, 3], [1167, 3, 3], [1169, 20, 15], [1174, 7, 7], [1183, 14, 11], [1187, 5, 5], [1192, 18, 13], [1199, 6, 6], [1204, 20, 16]]

function wavePath(points, axis) {
    const top = []
    const bottom = []
    const end = points[points.length - 1][0]
    let seg = 0
    for (let x = 0; x <= end; x++) {
        while (seg < points.length - 2 && x > points[seg + 1][0]) seg++
        const [x0, u0, d0] = points[seg]
        const [x1, u1, d1] = points[seg + 1]
        const t = Math.min(1, (x - x0) / (x1 - x0))
        const jitter = (k) => {
            const n = Math.abs(Math.sin(x * 12.9898 + k) * 43758.5453) % 1
            return 0.8 + 0.28 * n * n
        }
        const up = Math.max(0.8, (u0 + (u1 - u0) * t) * jitter(1))
        const down = Math.max(0.8, (d0 + (d1 - d0) * t) * jitter(5))
        top.push(`${x} ${(axis - up).toFixed(1)}`)
        bottom.unshift(`${x} ${(axis + down).toFixed(1)}`)
    }
    return `M${top.join("L")}L${bottom.join("L")}z`
}

function MarkerFlag({ at, label, line = dash, clip, dim }) {
    return (
        <div className="absolute bottom-0 top-0 flex" style={{ left: pct(at) }}>
            {line && <div className={`absolute bottom-0 top-[26px] w-[2px] ${line}`} />}
            <Icon name="cue" className={`-ml-2 ${dim ? "opacity-80" : ""}`} />
            {label && (
                <span className={`ml-[2px] h-[30px] overflow-hidden whitespace-nowrap pl-[3px] leading-[28px] text-[#9b9b9b] ${dim ? "bg-[#222]/70" : ""} ${clip || ""}`}>{label}</span>
            )}
        </div>
    )
}

function Clip({ title, length, points, pointsR, titleBg, bodyBg, color, children }) {
    const end = points[points.length - 1][0]
    return (
        <div className={`absolute bottom-0 left-[2px] top-0 flex flex-col ${bodyBg}`} style={{ width: pct(length) }}>
            <div className={`flex h-[28px] shrink-0 items-center pl-1 text-[18px] text-[#c8c8c8] ${titleBg}`}>{title}</div>
            <svg viewBox={`0 0 ${end} 220`} preserveAspectRatio="none" className="h-[220px] w-full">
                <path d={wavePath(points, 53)} fill={color} />
                <path d={wavePath(pointsR || points, 161)} fill={color} />
                <path d={`M0 80h${end}`} stroke="#b5b27a" strokeWidth="5" opacity=".75" />
                <path d={`M0 106h${end}`} stroke="#7d9a86" strokeWidth="1" />
                <path d="M0 0h14L0 16z" fill="#c9d3cf" opacity=".8" />
            </svg>
            {children}
        </div>
    )
}

const BOX = "rounded-sm border-2 border-[#313131] bg-[#1d1d1d] text-[#c8c8c8]"

function RouteButton({ value, className = "" }) {
    return (
        <button type="button" className={`flex h-[38px] items-center justify-between pl-3 pr-[10px] ${BOX} ${className}`}>
            {value}
            <Icon name="chevRight" />
        </button>
    )
}

function LetterButton({ letter, off }) {
    return (
        <button type="button" className={`h-[40px] w-[38px] rounded border-2 border-[#303030] font-['Liberation_Mono'] text-[20px] ${off ? "text-[#4a4a4a]" : "bg-[#1b1b1b] text-[#c0c0c0]"}`}>
            {letter}
        </button>
    )
}

function TrackHeader({ track }) {
    const { name, strip, height, stereo, master, selected } = track
    return (
        <div className={`flex border-[#323232] ${height} ${selected ? "bg-[#303030]" : "bg-[#232323]"}`}>
            <div className={`w-[26px] shrink-0 rounded-l-lg ${strip}`} />
            <div className="flex min-w-0 flex-1 flex-col pb-[11px] pl-[8px] pr-[10px] pt-[11px]">
                <div className="flex items-center gap-[6px]">
                    <Icon name={master ? "master" : "wave"} className="ml-2 mr-[2px] text-[#b4b4b4]" />
                    <span className="flex-1">{name}</span>
                    {master ? (
                        <><LetterButton letter="M" /><LetterButton letter="(S)" /></>
                    ) : (
                        <><LetterButton letter="M" /><LetterButton letter="S" /><LetterButton letter="R" off /><LetterButton letter="I" off /></>
                    )}
                </div>
                <div className="flex min-h-0 flex-1 gap-[6px]">
                    <div className="flex flex-1 flex-col">
                        <div className="mt-2 flex h-[38px] items-center text-[#9b9b9b]">
                            <Icon name="volume" />
                            <span className="ml-[9px] flex"><Knob label="Volume" /></span>
                            <span className="ml-[9px] w-[82px] text-[#459be0]">+0</span>
                            {!master && (
                                <>
                                    <Icon name="pan" />
                                    <span className="ml-[9px] flex"><Knob label="Pan" /></span>
                                    <span className="ml-[9px] text-[#459be0]">0</span>
                                </>
                            )}
                            {stereo && <Icon name="mono" className="ml-auto mr-[2px]" />}
                        </div>
                        <div className="mt-[5px] flex gap-[6px]">
                            <Icon name={master ? "arrowOut" : "arrowIn"} className="mt-[7px] text-[#b4b4b4]" />
                            <RouteButton value={master ? "Default Output" : "None"} className="flex-1" />
                            <IconButton name="phase" label="Invert phase" className={`h-[38px] w-[38px] ${BOX}`} />
                        </div>
                        {!master && (
                            <div className="mt-[6px] flex gap-[6px]">
                                <Icon name="arrowOut" className="mt-[7px] text-[#b4b4b4]" />
                                <RouteButton value="Master" className="flex-1" />
                            </div>
                        )}
                        <div className="mb-px mt-auto flex items-center">
                            <Icon name="chevRight" className="mb-1 ml-[2px] mr-[21px] text-[#b4b4b4]" />
                            <Select label={`${name} automation`} value="Read" className="h-[38px] flex-1" />
                        </div>
                    </div>
                    <div className="mb-px mr-[2px] mt-[18px] flex w-[36px] flex-col border-2 border-black bg-[#1d1d1d]">
                        <div className="flex h-[18px] border-b-2 border-black">
                            {stereo && <div className="w-1/2 border-r-2 border-black" />}
                        </div>
                        <div className="mb-[2px] mt-auto flex gap-[2px] px-px">
                            <div className="h-[2px] flex-1 bg-[#fff22d]" />
                            {stereo && <div className="h-[2px] flex-1 bg-[#fff22d]" />}
                        </div>
                    </div>
                </div>
            </div>
        </div>
    )
}

const TRACKS = [
    { name: "Host", strip: "bg-[#1c3029]", height: "h-[253px] border-b-6" },
    { name: "Interview", strip: "bg-[#1c391b]", height: "h-[254px] border-b-6" },
    { name: "Sound FX", strip: "bg-[#454014]", height: "h-[258px] border-b-6", stereo: true },
    { name: "Music Bed", strip: "bg-[#f05c38]", height: "h-[258px] border-b-6", stereo: true, selected: true },
    { name: "Master", strip: "bg-[#13283e]", height: "h-[254px] border-b-2", stereo: true, master: true },
]

function HostClip() {
    return (
        <Clip title={<><span className="flex-1">light-guitar-intro-transistor 44100 1 Vol...</span><Icon name="chevDown" className="mr-4" /></>} length={8.18} points={GUITAR} pointsR={GUITAR_R} titleBg="bg-[#1c332b]" bodyBg="bg-[#122f27]" color="#00b083">
            <svg width="14" height="16" className="absolute right-0 top-[28px]"><path d="M0 0h14v16z" fill="#c9d3cf" opacity=".8" /></svg>
            <Icon name="clipBars" className="absolute bottom-[20px] left-[16px] text-[#c0c0c0]" />
        </Clip>
    )
}

function InterviewClip() {
    return (
        <Clip title="PodcastingHouse-20190110-TheUntold" length={DURATION} points={VOICE} titleBg="bg-[#1c3c1b]" bodyBg="bg-[#0a3a16]" color="#00cc35">
            <div className="absolute inset-x-0 bottom-0 h-[6px] bg-[#1c3a1a]" />
            <svg viewBox="0 0 1204 220" preserveAspectRatio="none" className="absolute bottom-0 left-0 h-[220px] w-full">
                <path d="M0 217h89c75 0 95-45 109-112 8-40 12-70 17-105" fill="none" stroke="#a6a02f" strokeWidth="4" />
            </svg>
            <div className="absolute bottom-[8px] left-[16px] flex items-center text-[18px] text-[#c0c0c0]">
                <Icon name="clipBars" />
                <svg width="36" height="36" viewBox="0 0 36 36" className="ml-[19px] mr-[9px]">
                    <circle cx="18" cy="18" r="16" fill="#111" stroke="#c0c0c0" strokeWidth="2" />
                    <g fill="none" stroke="#c0c0c0" strokeWidth="2"><circle cx="18" cy="20" r="7" /><path d="M18 20l4-4M15 9h6M18 9v4M10 12l3 2" /></g>
                </svg>
                100%
            </div>
        </Clip>
    )
}

function Timeline() {
    return (
        <div className="relative min-w-0 flex-1 overflow-hidden">
            {TRACKS.map((track) => (
                <div key={track.name} className={`relative border-[#323232] ${track.height} ${track.selected ? "bg-[#4d4d4d]" : "bg-[#1d1d1d]"}`}>
                    {track.name === "Host" && (
                        <>
                            <HostClip />
                            <div className="absolute inset-x-0 bottom-0 top-[24px]"><MarkerFlag at={2.92} label="Marker 01" dim /></div>
                        </>
                    )}
                    {track.name === "Interview" && (
                        <>
                            <InterviewClip />
                            <div className="absolute inset-x-0 bottom-0 top-[24px]">
                                <MarkerFlag at={2.08} label="Marker 02" dim />
                                <MarkerFlag at={8.04} label="Marker 04" dim />
                                <MarkerFlag at={11.22} label="Marker 10" dim />
                                <MarkerFlag at={17.16} label="Marker" dim clip="w-[80px]" />
                                <div className="absolute bottom-0 top-0 flex w-[158px] justify-between" style={{ left: pct(19.04) }}>
                                    <svg width="158" height="28" className="absolute">
                                        <path d="M0 0h158v2H0z" fill="#000" />
                                        <path d="M0 2h158v2H0z" fill="#a5a5a5" />
                                        <path d="M0 4h8v23L0 18zM150 4h8v14l-8 9z" fill="#5f7263" />
                                        <path d="M7 9v8l-5-4zM152 9v8l5-4z" fill="#111" />
                                    </svg>
                                    <div className={`ml-2 mt-[26px] w-[2px] ${dashWide}`} />
                                    <span className="ml-1 h-[30px] flex-1 leading-[28px] text-[#9b9b9b]">Marker 05</span>
                                    <div className={`mr-2 mt-[26px] w-[2px] ${dashWide}`} />
                                </div>
                            </div>
                        </>
                    )}
                </div>
            ))}
            <div className={`absolute bottom-0 left-0 top-0 w-[2px] ${dashWide}`} />
            <div className={`absolute bottom-[4px] top-0 w-[2px] ${dash}`} style={{ left: pct(17.187) }} />
            <div className="absolute bottom-0 top-0 w-[2px] bg-[#b3100f]" style={{ left: pct(14.944) }} />
        </div>
    )
}

function Ruler() {
    const ticks = Array.from({ length: 24 }, (_, i) => i + 1)
    return (
        <div className="relative min-w-0 flex-1">
            <div className="relative -ml-2 -mr-[10px] h-[30px] border-t-2 border-[#999]">
                <svg width="10" height="28" className="absolute left-0 top-0"><path d="M0 0h9v28l-9-9z" fill="#6b6b6b" /><path d="M7 6v8L2 10z" fill="#111" /></svg>
                <span className="ml-[13px] leading-[26px]">30 Second Intro</span>
            </div>
            <div className="relative h-[53px] border-t-2 border-black">
                <span className="absolute left-1 top-[2px]">hms</span>
                {ticks.map((s) => (
                    <div key={s} className="absolute bottom-0 flex flex-col items-center" style={{ left: pct(s) }}>
                        {s % 5 === 0 ? (
                            <>
                                <span className="absolute bottom-[19px]">{`0:${s < 10 ? "0" : ""}${s}.0`}</span>
                                <i className="h-4 w-[2px] bg-[#8c8c8c]" />
                            </>
                        ) : (
                            <i className="h-[10px] w-[2px] bg-[#8c8c8c]" />
                        )}
                    </div>
                ))}
                <div className="absolute bottom-[2px] top-0 w-[2px] bg-[#1f4f80]" style={{ left: pct(5.03) }} />
                <div className="absolute -right-[2px] bottom-0 top-0 w-[2px] bg-black" />
            </div>
            <div className="absolute inset-x-0 bottom-0 top-0">
                <MarkerFlag at={14.944} label="Marker 0" clip="w-[82px]" />
                <MarkerFlag at={17.187} label="Marker 01" />
                <svg width="22" height="24" className="absolute bottom-[3px] -ml-[10px]" style={{ left: pct(14.944) }}>
                    <path d="M0 0h22v14l-11 10L0 14z" fill="#2d8ceb" />
                </svg>
            </div>
        </div>
    )
}

const TRANSPORT = [["stop", true], ["play"], ["pause", true], ["prev"], ["rewind"], ["forward"], ["next"], ["record"], ["loop"], ["skip"]]
const ZOOMS = ["zoomInV", "zoomOutV", "zoomInH", "zoomOutH", "zoomOutFull", "zoomInPoint", "zoomOutPoint", "zoomSelection", "stopwatch", "zoomTrack"]

function EditorPanel() {
    return (
        <Panel className="flex-1 outline-2 -outline-offset-2 outline-[#3a86d0]">
            <div className="flex pl-[25px]">
                <Tab className="w-[133px]">Mixer</Tab>
                <Tab active menu>Editor: Untitled Session 13.sesx *</Tab>
                <Tab className="ml-[44px]">Console</Tab>
            </div>
            <div className="mt-1 flex h-[78px] shrink-0 items-center bg-[#262626] pl-[12px] pr-[32px] pt-[10px]">
                <div className="relative h-[56px] flex-1 bg-black pt-3">
                    <div className="mr-[28px] h-1 bg-[#2f7430]" />
                    <svg width="42" height="60" className="absolute -left-[3px] -top-[2px]">
                        <rect x="6" y="1" width="30" height="58" rx="5" fill="#333" stroke="#6d6d6d" strokeWidth="3" />
                        <path d="M13 16h16" stroke="#5a8f5a" strokeWidth="4" />
                        <rect x="1" y="7" width="11" height="46" rx="4" fill="#555" stroke="#6d6d6d" strokeWidth="2" />
                        <rect x="30" y="7" width="11" height="46" rx="4" fill="#555" stroke="#6d6d6d" strokeWidth="2" />
                        <path d="M5 12v36M8 12v36M34 12v36M37 12v36" stroke="#222" strokeWidth="1" />
                        <path d="M20 5v50" stroke="#d0413c" strokeWidth="2" />
                    </svg>
                </div>
                <IconButton name="zoomOutFull" className="ml-[26px] text-[#b4b4b4]" />
            </div>
            <div className="flex h-[83px] shrink-0 bg-[#262626] pl-[14px] pr-[56px]">
                <div className="flex w-[446px] shrink-0 items-end pb-[9px] text-[#b4b4b4]">
                    <div className="mb-[3px] flex h-[42px] rounded border-2 border-[#303030] bg-[#1b1b1b]">
                        <IconButton name="swap" className="w-[42px] border-r-2 border-[#303030] bg-[#141414] text-[#2d8ceb]" />
                        <button type="button" aria-label="Effects" className="w-[42px] border-r-2 border-[#303030] font-['Liberation_Serif'] text-[30px] italic leading-[30px]">fx</button>
                        <IconButton name="sends" className="w-[42px] border-r-2 border-[#303030]" />
                        <IconButton name="bars" className="w-[43px]" />
                    </div>
                    <IconButton name="metronome" className="mb-[7px] ml-[97px]" />
                    <IconButton name="snapTime" className="ml-[8px] h-[42px] w-[42px] rounded border-2 border-[#303030] bg-[#161616] text-[#2d8ceb]" />
                    <IconButton name="magnet" className="ml-px h-[42px] w-[42px] rounded border-2 border-[#303030] bg-[#161616] text-[#2d8ceb]" />
                    <IconButton name="pin" className="mb-[7px] ml-[13px]" />
                </div>
                <Ruler />
            </div>
            <div className="flex min-h-0 flex-1 bg-[#262626] pl-[14px] pr-[18px]">
                <div className="w-[446px] shrink-0 border-b-2 border-[#323232] bg-[#232323]">
                    {TRACKS.map((track) => <TrackHeader key={track.name} track={track} />)}
                </div>
                <div className="flex min-w-0 flex-1 border-b-2 border-[#323232] bg-[#232323]"><Timeline /></div>
                <div className="relative ml-[2px] flex w-[36px] flex-col">
                    <div className="mb-[10px] mt-[4px] flex flex-1 flex-col gap-[6px] rounded-md border-x-3 border-t-8 border-[#636363] bg-[#303030]">
                        <div className="flex-[269] bg-[#435550]" />
                        <div className="flex-[272] bg-[#445e45]" />
                        <div className="flex-[279] bg-[#66623f]" />
                        <div className="flex-[277] bg-[#f46f5a]" />
                        <div className="flex-[271] bg-[#3f4f66]" />
                    </div>
                    <div className="absolute left-[6px] top-0 h-[14px] w-[24px] rounded border-3 border-[#757575] bg-[#333]" />
                    <div className="absolute bottom-0 left-[6px] h-[14px] w-[24px] rounded border-3 border-[#757575] bg-[#333]" />
                </div>
            </div>
            <div className="flex h-[75px] shrink-0 items-center pb-[3px] pl-[23px] pr-[20px] text-[#b4b4b4]">
                <span className="w-[358px] pt-1 text-[33px] leading-[40px] text-[#459be0]">0:14.944</span>
                {TRANSPORT.map(([name, off]) => <IconButton key={name} name={name} className={`w-[60px] ${off ? "text-[#4a4a4a]" : ""}`} />)}
                <div className="ml-auto flex">
                    {ZOOMS.map((name) => <IconButton key={name} name={name} className="w-[60px]" />)}
                </div>
            </div>
        </Panel>
    )
}

/* ---------- markers ---------- */

const MARKERS = [
    ["range", "30 Second Intro", "0:00.000", "0:30.000", "0:30.000"],
    ["cue", "Marker 01", "0:17.187", "", "0:00.000"],
    ["range", "Main", "0:30.000", "3:00.000", "2:30.000"],
    ["range", "30 Second Outro", "3:00.000", "3:30.000", "0:30.000"],
    ["cue", "Marker 02", "0:14.944", "", "0:00.000"],
]

function MarkersPanel() {
    return (
        <Panel className="w-[824px] shrink-0">
            <div className="flex pl-[25px]">
                <Tab className="w-[171px]">Metadata</Tab>
                <Tab active menu>Markers</Tab>
            </div>
            <div className="flex h-[60px] shrink-0 items-center pl-[19px] pr-[18px] pt-1 text-[#b4b4b4]">
                <IconButton name="marker" />
                <IconButton name="trash" className="ml-[36px]" />
                <IconButton name="mergeMarkers" className="ml-[30px] text-[#4a4a4a]" />
                <IconButton name="toPlaylist" className="ml-[22px] text-[#4a4a4a]" />
                <IconButton name="exportMarkers" className="ml-[24px] text-[#4a4a4a]" />
                <IconButton name="insert" className="ml-[24px] text-[#4a4a4a]" />
                <label className="ml-[28px] flex h-[39px] flex-1 items-center gap-2 rounded border-2 border-[#303030] bg-[#161616] pl-3">
                    <Icon name="searchDown" />
                    <input aria-label="Filter markers" className="w-full bg-transparent outline-none" />
                </label>
                <IconButton name="markerList" className="ml-4" />
            </div>
            <div className="relative mx-[11px] mb-[11px] min-h-0 flex-1 rounded border-2 border-[#303030] border-t-[#1c1c1c] bg-[#1d1d1d]">
                <table className="w-full table-fixed border-collapse text-left">
                    <thead className="bg-[#232323]">
                        <tr className="h-[37px] border-b-2 border-[#303030]">
                            <th className="w-[251px] pl-[7px] font-normal">Name</th>
                            <th className="w-[152px] border-l border-[#1c1c1c] pl-[7px] font-normal">Start</th>
                            <th className="w-[152px] border-l border-[#1c1c1c] pl-[7px] font-normal">End</th>
                            <th className="w-[152px] border-l border-[#1c1c1c] pl-[7px] font-normal">Duration</th>
                            <th className="border-l border-[#1c1c1c] pl-[7px] font-normal">
                                <span className="flex items-center gap-[6px]">Type <Icon name="sortUp" /></span>
                            </th>
                        </tr>
                    </thead>
                    <tbody className="text-[#459be0]">
                        {MARKERS.map(([icon, name, start, end, length], i) => (
                            <tr key={name} className={`h-[38px] border-b-2 border-[#2b2b2b] ${i === 4 ? "bg-[#464646]" : ""}`}>
                                <td className="pl-3 text-[#9b9b9b]">
                                    <span className="flex items-center"><span className="flex w-[34px]"><Icon name={icon} /></span>{name}</span>
                                </td>
                                <td className="pl-[7px]">{start}</td>
                                <td className="pl-[7px]">{end}</td>
                                <td className="pl-[7px]">{length}</td>
                                <td className="pl-[2px]">
                                    <button type="button" className="block h-[32px] w-full rounded-l border-2 border-r-0 border-[#303030] bg-[#1b1b1b] pl-3 text-left leading-[28px] text-[#c8c8c8]">Cue</button>
                                </td>
                            </tr>
                        ))}
                    </tbody>
                </table>
                <ScrollThumb className="bottom-0 left-0 h-5 w-[496px]" />
            </div>
        </Panel>
    )
}

/* ---------- bottom row ---------- */

function LevelsPanel() {
    const marks = Array.from({ length: 61 }, (_, i) => i - 60)
    return (
        <Panel className="flex-1">
            <Tab menu className="ml-[23px]">Levels</Tab>
            <div className="ml-[11px] mr-[12px] mt-[14px] flex h-[82px] shrink-0 border-2 border-black bg-[#1d1d1d]">
                <div className="flex flex-1 flex-col gap-[2px] pl-[2px]">
                    <span className="w-[2px] flex-1 bg-[#fff22d]" />
                    <span className="w-[2px] flex-1 bg-[#fff22d]" />
                </div>
                <div className="w-[19px] border-l-2 border-black"><div className="h-1/2 border-b-2 border-black" /></div>
            </div>
            <div className="relative ml-[15px] mr-[35px] h-[40px] text-[18px] leading-[20px]">
                {marks.map((db, i) => (
                    <div key={db} className="absolute flex w-0 flex-col items-center" style={{ left: `${(i / 60) * 100}%` }}>
                        <i className={`w-px bg-[#9b9b9b] ${db % 3 === 0 ? "h-2" : "h-1"}`} />
                        {db % 3 === 0 && <span className={`mt-1 ${i === 0 ? "ml-[14px]" : ""}`}>{i === 0 ? "dB" : db}</span>}
                    </div>
                ))}
            </div>
        </Panel>
    )
}

function SelectionPanel() {
    return (
        <Panel className="w-[554px] shrink-0">
            <Tab menu className="ml-6">Selection/View</Tab>
            <table className="ml-[22px] mt-[5px] w-[510px] table-fixed text-left">
                <thead>
                    <tr className="h-[38px]">
                        <th className="w-[105px]" />
                        <th className="w-[144px] font-normal">Start</th>
                        <th className="w-[142px] font-normal">End</th>
                        <th className="font-normal">Duration</th>
                    </tr>
                </thead>
                <tbody className="text-[#459be0]">
                    <tr className="h-[38px]">
                        <th className="font-normal text-[#9b9b9b]">Selection</th><td>0:14.944</td><td>0:14.944</td><td>0:00.000</td>
                    </tr>
                    <tr className="h-[44px]">
                        <th className="font-normal text-[#9b9b9b]">View</th><td>0:00.000</td><td>0:24.158</td><td>0:24.158</td>
                    </tr>
                </tbody>
            </table>
        </Panel>
    )
}

export default function App() {
    return (
        <div className="flex h-screen flex-col overflow-hidden bg-[#161616] font-['Noto_Sans_CJK_SC',sans-serif] text-[21px] leading-[28px] text-[#9b9b9b]">
            <TitleBar />
            <Toolbar />
            <main className="mt-2 flex min-h-0 flex-1 gap-2 px-[2px]">
                <div className="flex w-[442px] shrink-0 flex-col gap-2">
                    <FilesPanel />
                    <EffectsPanel />
                    <HistoryPanel />
                </div>
                <div className="flex min-w-0 flex-1 flex-col gap-2">
                    <div className="flex min-h-0 flex-1 gap-2">
                        <FavoritesPanel />
                        <EditorPanel />
                        <MarkersPanel />
                    </div>
                    <div className="flex h-[188px] shrink-0 gap-2">
                        <LevelsPanel />
                        <SelectionPanel />
                    </div>
                </div>
            </main>
            <footer className="mt-1 h-2 shrink-0 bg-[#222]" />
        </div>
    )
}
